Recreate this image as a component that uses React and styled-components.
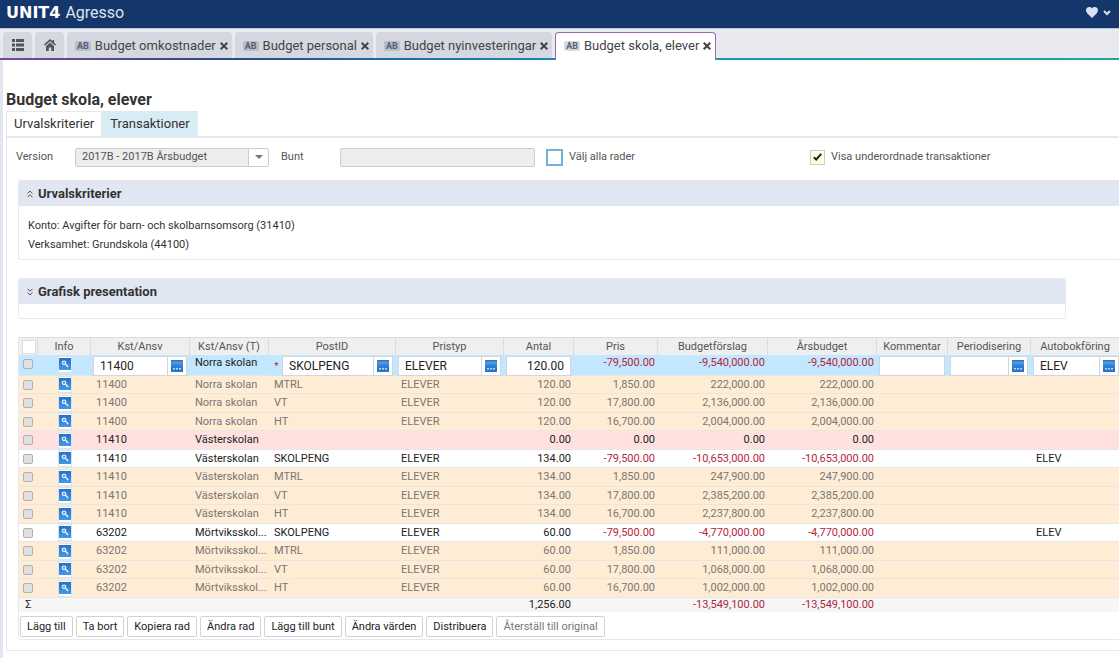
import React, { useState } from "react";
import styled, { createGlobalStyle } from "styled-components";

const tabs = [
  { title: "Budget omkostnader" },
  { title: "Budget personal" },
  { title: "Budget nyinvesteringar" },
  { title: "Budget skola, elever", active: true },
];

const columns = [
  { title: "Info", width: 53 },
  { title: "Kst/Ansv", width: 99 },
  { title: "Kst/Ansv (T)", width: 79 },
  { title: "PostID", width: 127 },
  { title: "Pristyp", width: 108 },
  { title: "Antal", width: 70 },
  { title: "Pris", width: 84 },
  { title: "Budgetförslag", width: 110 },
  { title: "Årsbudget", width: 109 },
  { title: "Kommentar", width: 71 },
  { title: "Periodisering", width: 83 },
  { title: "Autobokföring" },
];

const rows = [
  ["sub", "11400", "Norra skolan", "MTRL", "ELEVER", "120.00", "1,850.00", "222,000.00", ""],
  ["sub", "11400", "Norra skolan", "VT", "ELEVER", "120.00", "17,800.00", "2,136,000.00", ""],
  ["sub", "11400", "Norra skolan", "HT", "ELEVER", "120.00", "16,700.00", "2,004,000.00", ""],
  ["empty", "11410", "Västerskolan", "", "", "0.00", "0.00", "0.00", ""],
  ["main", "11410", "Västerskolan", "SKOLPENG", "ELEVER", "134.00", "-79,500.00", "-10,653,000.00", "ELEV"],
  ["sub", "11410", "Västerskolan", "MTRL", "ELEVER", "134.00", "1,850.00", "247,900.00", ""],
  ["sub", "11410", "Västerskolan", "VT", "ELEVER", "134.00", "17,800.00", "2,385,200.00", ""],
  ["sub", "11410", "Västerskolan", "HT", "ELEVER", "134.00", "16,700.00", "2,237,800.00", ""],
  ["main", "63202", "Mörtviksskol...", "SKOLPENG", "ELEVER", "60.00", "-79,500.00", "-4,770,000.00", "ELEV"],
  ["sub", "63202", "Mörtviksskol...", "MTRL", "ELEVER", "60.00", "1,850.00", "111,000.00", ""],
  ["sub", "63202", "Mörtviksskol...", "VT", "ELEVER", "60.00", "17,800.00", "1,068,000.00", ""],
  ["sub", "63202", "Mörtviksskol...", "HT", "ELEVER", "60.00", "16,700.00", "1,002,000.00", ""],
];

const actions = [
  "Lägg till",
  "Ta bort",
  "Kopiera rad",
  "Ändra rad",
  "Lägg till bunt",
  "Ändra värden",
  "Distribuera",
  "Återställ till original",
];

const rowColors = {
  sub: "#ffecd4",
  empty: "#ffe2e0",
  main: "#fff",
};

const ListIcon = () => (
  <svg width="12" height="12" viewBox="0 0 12 12" fill="#555">
    <path d="M0 0h3v3H0zM4 0h8v3H4zM0 4.5h3v3H0zM4 4.5h8v3H4zM0 9h3v3H0zM4 9h8v3H4z" />
  </svg>
);

const HomeIcon = () => (
  <svg width="12" height="12" viewBox="0 0 12 12" fill="#555">
    <path d="M6 0 0 5.6l1 1.1L6 2.2l5 4.5 1-1.1-2-1.9V1H8.4v1.2z" />
    <path d="M6 3.6 2 7.2V12h2.8V8.4h2.4V12H10V7.2z" />
  </svg>
);

const CloseIcon = () => (
  <svg width="8" height="8" viewBox="0 0 8 8" stroke="#444" strokeWidth="2">
    <path d="M.7.7l6.6 6.6M7.3.7.7 7.3" />
  </svg>
);

const HeartIcon = () => (
  <svg width="12" height="11" viewBox="0 0 12 11" fill="#d9e1ec">
    <path d="M6 11 1.2 6.2C-.4 4.500-.3 2 1.100.8 2.600-.4 4.900-.2 6 1.500 7.100-.2 9.400-.4 10.900.8c1.400 1.200 1.500 3.700-.1 5.400z" />
  </svg>
);

const DownIcon = () => (
  <svg width="8" height="6" viewBox="0 0 8 6" fill="none" stroke="#d9e1ec" strokeWidth="2">
    <path d="M1 1l3 3 3-3" />
  </svg>
);

const FoldIcon = ({ open }) => (
  <svg width="6" height="8" viewBox="0 0 6 8" fill="none" stroke="#555" strokeWidth="1">
    <path d={open ? "M.5 3.500 3 1l2.500 2.500M.5 7.200 3 4.700l2.500 2.500" : "M.5.800 3 3.300 5.500.800M.5 4.500 3 7l2.500-2.500"} />
  </svg>
);

const LookupIcon = () => (
  <svg width="12" height="12" viewBox="0 0 12 12">
    <defs>
      <linearGradient id="lookup" x1="0" y1="0" x2="0" y2="1">
        <stop offset="0" stopColor="#6fb0ea" />
        <stop offset="0.5" stopColor="#2b7ed3" />
        <stop offset="1" stopColor="#2a72c8" />
      </linearGradient>
    </defs>
    <rect width="12" height="12" fill="url(#lookup)" />
    <path d="M0 0h12v1.500H0z" fill="#2f72bd" />
    <path d="M2 8h2v1.500H2zM5 8h2v1.500H5zM8 8h2v1.500H8z" fill="#b8d6f4" />
  </svg>
);

const InfoIcon = () => (
  <svg width="12" height="12" viewBox="0 0 12 12">
    <defs>
      <linearGradient id="info" x1="0" y1="0" x2="0" y2="1">
        <stop offset="0" stopColor="#2a6fc0" />
        <stop offset="1" stopColor="#3f9aec" />
      </linearGradient>
    </defs>
    <rect width="12" height="12" fill="url(#info)" />
    <circle cx="5" cy="4.800" r="1.800" fill="#5f9ddd" stroke="#e6f1fc" strokeWidth="1.200" />
    <path d="M6.500 6.300 9.200 9" stroke="#e6f1fc" strokeWidth="1.500" />
  </svg>
);

const Section = ({ title, defaultOpen, inset, children }) => {
  const [open, setOpen] = useState(defaultOpen);
  return (
    <Panel $inset={inset}>
      <PanelTitle>
        <PanelToggle type="button" aria-expanded={open} onClick={() => setOpen(!open)}>
          <FoldIcon open={open} />
          {title}
        </PanelToggle>
      </PanelTitle>
      <PanelBody>{open ? children : null}</PanelBody>
    </Panel>
  );
};

const Lookup = ({ label, value, required }) => (
  <Editor>
    {required ? <Required>*</Required> : null}
    <EditInput aria-label={label} defaultValue={value} />
    <LookupButton type="button" aria-label={"Sök " + label}>
      <LookupIcon />
    </LookupButton>
  </Editor>
);

const InfoCell = () => (
  <CenterCell>
    <InfoButton type="button" aria-label="Info">
      <InfoIcon />
    </InfoButton>
  </CenterCell>
);

const Amount = ({ children }) => (
  <Cell $align="right" $negative={children.startsWith("-")}>
    {children}
  </Cell>
);

export default () => {
  const [all, setAll] = useState(false);
  const [showSub, setShowSub] = useState(true);

  const mountRows = () => {
    return rows.map(([kind, kst, name, post, type, count, price, sum, auto], i) => (
      <Row key={i} $kind={kind}>
        <Cell>
          <RowCheck type="checkbox" aria-label={"Välj rad " + (i + 2)} />
        </Cell>
        <InfoCell />
        <Cell>{kst}</Cell>
        <Cell>{name}</Cell>
        <Cell>{post}</Cell>
        <Cell>{type}</Cell>
        <Amount>{count}</Amount>
        <Amount>{price}</Amount>
        <Amount>{sum}</Amount>
        <Amount>{sum}</Amount>
        <Cell />
        <Cell />
        <Cell>{auto}</Cell>
      </Row>
    ));
  };

  return (
    <Page>
      <GlobalStyle />
      <Header>
        <Brand>UNIT4</Brand>
        <Product>Agresso</Product>
        <Favourites type="button" aria-label="Favoriter">
          <HeartIcon />
          <DownIcon />
        </Favourites>
      </Header>
      <TabBar>
        <IconTab type="button" aria-label="Meny">
          <ListIcon />
        </IconTab>
        <IconTab type="button" aria-label="Hem">
          <HomeIcon />
        </IconTab>
        {tabs.map((tab) => (
          <Tab key={tab.title} $active={tab.active}>
            <Badge $active={tab.active}>AB</Badge>
            <TabLink href="#">{tab.title}</TabLink>
            <CloseButton type="button" aria-label={"Stäng " + tab.title}>
              <CloseIcon />
            </CloseButton>
          </Tab>
        ))}
      </TabBar>
      <Main>
        <Title>Budget skola, elever</Title>
        <SubTabs>
          <SubTab href="#">Urvalskriterier</SubTab>
          <SubTab href="#" $active>
            Transaktioner
          </SubTab>
        </SubTabs>
        <Content>
          <Filters>
            <label htmlFor="version">Version</label>
            <SelectBox>
              <Select id="version" disabled>
                <option>2017B - 2017B Årsbudget</option>
              </Select>
              <Arrow>
                <svg width="8" height="4" viewBox="0 0 8 4" fill="#777">
                  <path d="M0 0h8L4 4z" />
                </svg>
              </Arrow>
            </SelectBox>
            <label htmlFor="bunt">Bunt</label>
            <TextInput id="bunt" disabled />
            <CheckLabel>
              <BigCheck type="checkbox" checked={all} onChange={() => setAll(!all)} />
              Välj alla rader
            </CheckLabel>
            <CheckLabel>
              <CheckBox>
                <SmallCheck type="checkbox" checked={showSub} onChange={() => setShowSub(!showSub)} />
                {showSub ? (
                  <svg width="9" height="8" viewBox="0 0 9 8" fill="none" stroke="#222" strokeWidth="2">
                    <path d="M.8 4.200 3.200 6.500 8.200.8" />
                  </svg>
                ) : null}
              </CheckBox>
              Visa underordnade transaktioner
            </CheckLabel>
          </Filters>
          <Section title="Urvalskriterier" defaultOpen>
            <Criteria>
              <li>Konto: Avgifter för barn- och skolbarnsomsorg (31410)</li>
              <li>Verksamhet: Grundskola (44100)</li>
            </Criteria>
          </Section>
          <Section title="Grafisk presentation" inset />
          <TablePanel>
            <Table>
              <colgroup>
                <Col $width={19} />
                {columns.map((col) => (
                  <Col key={col.title} $width={col.width} />
                ))}
              </colgroup>
              <thead>
                <tr>
                  <HeadCell>
                    <HeadCheck type="checkbox" aria-label="Välj alla" />
                  </HeadCell>
                  {columns.map((col) => (
                    <HeadCell key={col.title}>{col.title}</HeadCell>
                  ))}
                </tr>
              </thead>
              <tbody>
                <EditRow>
                  <Cell>
                    <RowCheck type="checkbox" aria-label="Välj rad 1" />
                  </Cell>
                  <InfoCell />
                  <EditCell>
                    <Lookup label="Kst/Ansv" value="11400" />
                  </EditCell>
                  <Cell>Norra skolan</Cell>
                  <EditCell>
                    <Lookup label="PostID" value="SKOLPENG" required />
                  </EditCell>
                  <EditCell>
                    <Lookup label="Pristyp" value="ELEVER" />
                  </EditCell>
                  <EditCell>
                    <Editor>
                      <EditInput aria-label="Antal" defaultValue="120.00" $right />
                    </Editor>
                  </EditCell>
                  <Amount>-79,500.00</Amount>
                  <Amount>-9,540,000.00</Amount>
                  <Amount>-9,540,000.00</Amount>
                  <EditCell>
                    <Editor>
                      <EditInput aria-label="Kommentar" />
                    </Editor>
                  </EditCell>
                  <EditCell>
                    <Lookup label="Periodisering" />
                  </EditCell>
                  <EditCell>
                    <Lookup label="Autobokföring" value="ELEV" />
                  </EditCell>
                </EditRow>
                {mountRows()}
              </tbody>
              <tfoot>
                <SumRow>
                  <CenterCell>Σ</CenterCell>
                  <Cell colSpan={5} />
                  <Amount>1,256.00</Amount>
                  <Cell />
                  <Amount>-13,549,100.00</Amount>
                  <Amount>-13,549,100.00</Amount>
                  <Cell colSpan={3} />
                </SumRow>
              </tfoot>
            </Table>
            <Actions>
              {actions.map((name, i) => (
                <Action key={name} type="button" disabled={i === actions.length - 1}>
                  {name}
                </Action>
              ))}
            </Actions>
          </TablePanel>
        </Content>
      </Main>
    </Page>
  );
};

const GlobalStyle = createGlobalStyle`
  * {
    box-sizing: border-box;
  }
  body {
    margin: 0;
    background-color: #fff;
    color: #333;
    font-family: Roboto, "Liberation Sans", sans-serif;
    font-size: 11px;
    line-height: 14px;
  }
  button, input, select {
    margin: 0;
    padding: 0;
    border: 0;
    border-radius: 0;
    background: none;
    color: inherit;
    font: inherit;
  }
  svg {
    display: block;
    flex: none;
  }
`;

const Page = styled.div`
  display: flex;
  flex-direction: column;
  min-height: 100vh;
  overflow-x: hidden;
`;

const Header = styled.header`
  display: flex;
  align-items: center;
  gap: 5px;
  height: 28px;
  padding: 0 8px 3px 6px;
  background-color: #14366b;
  color: #fff;
`;

const Brand = styled.strong`
  font-family: "DejaVu Sans", sans-serif;
  font-size: 16px;
  line-height: 24px;
`;

const Product = styled.span`
  flex: 1;
  color: #dce4f0;
  font-size: 16px;
  line-height: 24px;
`;

const Favourites = styled.button`
  display: flex;
  align-items: center;
  gap: 5px;
`;

const TabBar = styled.nav`
  display: flex;
  gap: 3px;
  height: 32px;
  padding: 3px 0 2px 3px;
  border-top: 1px solid #b9c3d6;
  background:
    linear-gradient(90deg, #7a4a94, #2c4a86 20%, #1a70a8 36%, #1e93ae 56%, #22a698) bottom / 100% 2px no-repeat,
    #e9eaf0;
`;

const IconTab = styled.button`
  display: flex;
  align-items: center;
  justify-content: center;
  width: 29px;
  border-radius: 4px 4px 0 0;
  background-color: #d5d8e0;
`;

const Tab = styled.div`
  display: flex;
  align-items: center;
  gap: 4px;
  padding: 1px 4px 0 8px;
  border-radius: 4px 4px 0 0;
  background-color: #d5d8e0;
  ${(props) =>
    props.$active &&
    `
    margin-bottom: -2px;
    padding-bottom: 2px;
    border: 1px solid #9a6bb0;
    border-bottom: 0;
    background-color: #fff;
  `}
`;

const Badge = styled.span`
  padding: 0 2px;
  border-radius: 2px;
  background-color: ${(props) => (props.$active ? "#d5d9e3" : "#b8bdca")};
  color: #555f70;
  font-size: 9px;
  font-weight: 700;
  line-height: 10px;
`;

const TabLink = styled.a`
  color: #444;
  font-size: 13px;
  line-height: 16px;
  text-decoration: none;
  white-space: nowrap;
`;

const CloseButton = styled.button`
  padding: 2px 0;
`;

const Main = styled.main`
  flex: 1;
  padding: 30px 0 7px 3px;
  border-left: 3px solid #e2e6ef;
`;

const Title = styled.h1`
  margin: 0 0 2px;
  font-size: 16px;
  font-weight: 700;
  line-height: 19px;
`;

const SubTabs = styled.nav`
  display: flex;
`;

const SubTab = styled.a`
  padding: 4px 7px;
  border: 1px solid #e2e8ee;
  border-bottom: 0;
  background-color: ${(props) => (props.$active ? "#d8ecf6" : "#fff")};
  color: #333;
  font-size: 13px;
  line-height: 16px;
  text-decoration: none;
`;

const Content = styled.div`
  padding: 9px 0 10px 11px;
  border: solid #e4e8ee;
  border-width: 2px 0 1px 1px;
`;

const Filters = styled.div`
  display: grid;
  grid-template-columns: 59px 206px 59px 206px 264px 1fr;
  align-items: center;
  height: 20px;
  margin: 0 0 13px -2px;
  color: #555;
`;

const SelectBox = styled.div`
  display: flex;
  width: 194px;
  height: 19px;
  border: 1px solid #ccc;
  border-radius: 2px;
`;

const Select = styled.select`
  flex: 1;
  padding: 0 6px;
  background-color: #ededed;
  opacity: 1;
  appearance: none;
`;

const Arrow = styled.span`
  display: flex;
  align-items: center;
  justify-content: center;
  width: 20px;
  border-left: 1px solid #ccc;
`;

const TextInput = styled.input`
  width: 195px;
  height: 19px;
  border: 1px solid #ccc;
  border-radius: 2px;
  background-color: #ededed;
`;

const CheckLabel = styled.label`
  display: flex;
  align-items: center;
  gap: 6px;
`;

const BigCheck = styled.input`
  width: 17px;
  height: 17px;
  border: 2px solid #6fb4d6;
  background-color: #fff;
  appearance: none;
  &:checked {
    background-color: #6fb4d6;
  }
`;

const CheckBox = styled.span`
  display: grid;
  place-items: center;
  > * {
    grid-area: 1 / 1;
    pointer-events: none;
  }
`;

const SmallCheck = styled.input`
  width: 15px;
  height: 15px;
  border: 1px solid #ccc;
  background-color: #ffffe4;
  appearance: none;
`;

const Panel = styled.section`
  margin: 0 ${(props) => (props.$inset ? "53px" : "0")} 18px 0;
  border: 1px solid #e6e8ec;
  border-right-width: ${(props) => (props.$inset ? "1px" : "0")};
  border-radius: ${(props) => (props.$inset ? "3px" : "3px 0 0 3px")};
`;

const PanelTitle = styled.h2`
  display: flex;
  margin: 0;
  background-color: #e0e6f2;
  font-size: 13px;
  font-weight: 700;
  line-height: 25px;
`;

const PanelToggle = styled.button`
  display: flex;
  flex: 1;
  align-items: center;
  gap: 5px;
  padding-left: 8px;
`;

const PanelBody = styled.div`
  min-height: 14px;
`;

const Criteria = styled.ul`
  margin: 0;
  padding: 10px 9px 5px;
  line-height: 19px;
  list-style: none;
`;

const TablePanel = styled.section`
  border: solid #e6e8ec;
  border-width: 0 0 1px 1px;
  border-radius: 0 0 0 3px;
`;

const Table = styled.table`
  width: 100%;
  border-spacing: 0;
  table-layout: fixed;
`;

const Col = styled.col`
  width: ${(props) => (props.$width ? props.$width + "px" : "auto")};
`;

const HeadCell = styled.th`
  height: 18px;
  padding: 0;
  border: solid #dcdcdc;
  border-width: 1px 1px 0 0;
  background-color: #efefef;
  color: #555;
  font-weight: 400;
  &:last-child {
    border-right: 0;
  }
`;

const HeadCheck = styled.input`
  display: block;
  width: 14px;
  height: 14px;
  margin-left: 3px;
  border: 1px solid #ddd;
  background-color: #fff;
  appearance: none;
`;

const Cell = styled.td`
  padding: 0 3px 0 5px;
  border-bottom: 1px solid #e6e6e6;
  color: ${(props) => (props.$negative ? "#b3263a" : "inherit")};
  text-align: ${(props) => props.$align || "left"};
  white-space: nowrap;
  &:first-child {
    padding: 0 0 0 4px;
  }
`;

const CenterCell = styled(Cell)`
  padding: 0;
  text-align: center;
  &:first-child {
    padding: 0;
  }
`;

const Row = styled.tr`
  height: 18px;
  background-color: ${(props) => rowColors[props.$kind]};
  color: ${(props) => (props.$kind === "sub" ? "#777" : "#222")};
  &:nth-child(odd) {
    height: 19px;
  }
`;

const EditRow = styled.tr`
  height: 21px;
  background-color: #c2e7ff;
  color: #222;
  > td {
    padding-top: 1px;
    vertical-align: top;
  }
`;

const SumRow = styled.tr`
  height: 14px;
  background-color: #f6f6f6;
  color: #222;
  > td {
    border: 0;
  }
`;

const EditCell = styled.td`
  padding: 1px 3px 0 2px;
  &:last-child {
    padding-right: 0;
  }
`;

const Editor = styled.div`
  display: flex;
  height: 20px;
`;

const Required = styled.span`
  width: 11px;
  color: #c00;
  font-size: 9px;
  line-height: 20px;
  text-align: center;
`;

const EditInput = styled.input`
  flex: 1;
  min-width: 0;
  padding: 0 6px;
  border: 1px solid #d0d6dc;
  background-color: #fff;
  font-size: 12px;
  text-align: ${(props) => (props.$right ? "right" : "left")};
`;

const LookupButton = styled.button`
  display: flex;
  align-items: center;
  justify-content: center;
  width: 19px;
  border: solid #d0d6dc;
  border-width: 1px 1px 1px 0;
  background-color: #fff;
`;

const RowCheck = styled.input`
  display: block;
  width: 10px;
  height: 10px;
  border: 1px solid #b0b0b0;
  border-radius: 2px;
  background-color: #e0e0e0;
  appearance: none;
  ${EditRow} & {
    margin-top: 4px;
  }
  &:checked {
    background-color: #2b7ed3;
  }
`;

const InfoButton = styled.button`
  display: inline-block;
  padding: 1px 0 2px;
  border: 1px solid #dbe3ec;
  background-color: #fff;
  vertical-align: top;
`;

const Actions = styled.div`
  display: flex;
  gap: 3px;
  padding: 4px 0 2px 1px;
`;

const Action = styled.button`
  height: 21px;
  padding: 0 6px;
  border: 1px solid #d2d2d2;
  border-radius: 2px;
  background-color: #fff;
  color: #222;
  white-space: nowrap;
  &:disabled {
    color: #777;
  }
`;
